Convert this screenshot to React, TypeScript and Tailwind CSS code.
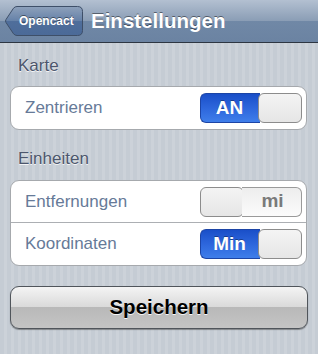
import React from 'react';

function Toggle({ on, label }: { on: boolean; label: string }) {
    if (on) {
        return (
            <div className="flex h-[30px] w-[102px] shrink-0">
                <div className="flex h-full flex-1 items-center justify-center rounded-l-[6px] border border-r-0 border-[#1c45a6] bg-[linear-gradient(to_bottom,#1a4fc8,#2d66dc_50%,#3f7eea)] pr-[2px] text-[19px] font-bold text-white [text-shadow:0_-1px_0_rgba(0,0,0,0.35)]">
                    {label}
                </div>
                <div className="-ml-[2px] h-full w-[44px] rounded-[6px] border border-[#8c8c8c] bg-[linear-gradient(to_bottom,#f4f4f4,#e6e6e6)]" />
            </div>
        );
    }
    return (
        <div className="flex h-[30px] w-[102px] shrink-0">
            <div className="h-full w-[44px] rounded-[6px] border border-[#8c8c8c] bg-[linear-gradient(to_bottom,#f4f4f4,#e6e6e6)]" />
            <div className="-ml-[2px] flex h-full flex-1 items-center justify-center rounded-r-[6px] border border-l-0 border-[#9a9a9a] bg-[linear-gradient(to_bottom,#ededed,#fbfbfb)] pl-[2px] text-[19px] font-bold text-[#7a7a7a]">
                {label}
            </div>
        </div>
    );
}

function Row({ label, children, divider }: { label: string; children: React.ReactNode; divider?: boolean }) {
    return (
        <div className={`flex h-[42px] items-center justify-between pl-[14px] pr-[4px] ${divider ? 'border-b border-[#acafb3]' : ''}`}>
            <span className="text-[17px] text-[#667a98]">{label}</span>
            {children}
        </div>
    );
}

export default function App() {
    return (
        <div
            className="min-h-[354px] w-[318px] bg-[repeating-linear-gradient(90deg,#c5ccd4_0px,#c5ccd4_4px,#ccd2d9_4px,#ccd2d9_7px)] pb-4"
            style={{ fontFamily: '"Liberation Sans", Arial, sans-serif' }}
        >
            <div className="relative flex h-[43px] items-center border-b border-[#2d3642] bg-[linear-gradient(to_bottom,#b3c0d1,#8a9db5_50%,#7088a6_51%,#6b83a2)]">
                <div className="relative ml-[5px] mt-[-1px] flex h-[30px] w-[78px] items-center">
                    <svg className="absolute inset-0" width="78" height="30" viewBox="0 0 78 30">
                        <defs>
                            <linearGradient id="bb" x1="0" y1="0" x2="0" y2="1">
                                <stop offset="0" stopColor="#8ea1bb" />
                                <stop offset="0.5" stopColor="#6581a8" />
                                <stop offset="0.51" stopColor="#4f6e9b" />
                                <stop offset="1" stopColor="#4b6a98" />
                            </linearGradient>
                        </defs>
                        <path
                            d="M12 0.5 H72.5 Q77.5 0.5 77.5 5.5 V24.5 Q77.5 29.5 72.5 29.5 H12 Q10 29.5 8.5 27.8 L1 16.5 Q0 15 1 13.5 L8.5 2.2 Q10 0.5 12 0.5 Z"
                            fill="url(#bb)"
                            stroke="#3e4f68"
                        />
                    </svg>
                    <span className="relative ml-[14px] text-[12px] font-bold text-white [text-shadow:0_-1px_0_rgba(0,0,0,0.45)]">
                        Opencact
                    </span>
                </div>
                <h1 className="ml-[8px] text-[20.5px] font-bold text-white [text-shadow:0_-1px_0_rgba(0,0,0,0.45)]">
                    Einstellungen
                </h1>
            </div>

            <div className="px-[10px]">
                <div className="mt-[13px] mb-[10px] h-[20px] pl-[8px] text-[17px] leading-[20px] text-[#4c566c] [text-shadow:0_1px_0_rgba(255,255,255,0.8)]">
                    Karte
                </div>
                <div className="w-[297px] rounded-[9px] border border-[#a6a9ad] bg-white">
                    <Row label="Zentrieren">
                        <Toggle on label="AN" />
                    </Row>
                </div>

                <div className="mt-[19px] mb-[11px] h-[20px] pl-[8px] text-[17px] leading-[20px] text-[#4c566c] [text-shadow:0_1px_0_rgba(255,255,255,0.8)]">
                    Einheiten
                </div>
                <div className="w-[297px] rounded-[9px] border border-[#a6a9ad] bg-white">
                    <Row label="Entfernungen" divider>
                        <Toggle on={false} label="mi" />
                    </Row>
                    <Row label="Koordinaten">
                        <Toggle on label="Min" />
                    </Row>
                </div>

                <button className="mt-[20px] flex h-[43px] w-[298px] items-center justify-center rounded-[9px] border-[1.5px] border-[#50555b] bg-[linear-gradient(to_bottom,#f4f4f4,#d9d9d9_50%,#b9b9b9_50%,#c4c4c4)] text-[20.5px] font-bold text-black shadow-[0_1px_1px_rgba(60,60,60,0.5)] [text-shadow:0_1px_0_rgba(255,255,255,0.9)]">
                    Speichern
                </button>
            </div>
        </div>
    );
}
